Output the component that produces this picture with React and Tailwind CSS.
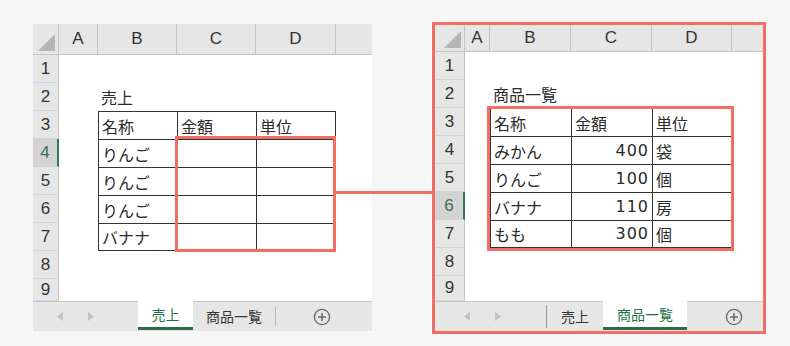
import clsx from 'clsx'

// 左右2つのシートをキャプチャ風に並べる
const ROWS = [1, 2, 3, 4, 5, 6, 7, 8, 9]
const COLS = ['A', 'B', 'C', 'D']

const leftData = {
  2: ['', '売上', '', ''],
  3: ['', '名称', '金額', '単位'],
  4: ['', 'りんご', '', ''],
  5: ['', 'りんご', '', ''],
  6: ['', 'りんご', '', ''],
  7: ['', 'バナナ', '', ''],
}

const rightData = {
  2: ['', '商品一覧', '', ''],
  3: ['', '名称', '金額', '単位'],
  4: ['', 'みかん', '400', '袋'],
  5: ['', 'りんご', '100', '個'],
  6: ['', 'バナナ', '110', '房'],
  7: ['', 'もも', '300', '個'],
}

function Corner() {
  return (
    <div className="relative border-r border-b border-[#c4c4c4] bg-[#e6e6e6]">
      <svg className="absolute right-[3px] bottom-[3px]" width="17" height="17" viewBox="0 0 17 17">
        <polygon points="17,0 17,17 0,17" fill="#b5b5b5" />
      </svg>
    </div>
  )
}

function PlusIcon() {
  return (
    <svg width="18" height="18" viewBox="0 0 18 18">
      <circle cx="9" cy="9" r="7.6" fill="none" stroke="#6b6b6b" strokeWidth="1.4" />
      <path d="M9 5v8M5 9h8" stroke="#6b6b6b" strokeWidth="1.6" />
    </svg>
  )
}

function Arrow({ dir }) {
  return (
    <svg width="6" height="9" viewBox="0 0 6 9">
      {dir === 'l'
        ? <polygon points="6,0 6,9 0,4.5" fill="#c2c2c2" />
        : <polygon points="0,0 0,9 6,4.5" fill="#c2c2c2" />}
    </svg>
  )
}

function Tab({ label, active, w }) {
  return (
    <div className={clsx(
      'flex h-full items-center justify-center text-[14px]',
      w,
      active
        ? 'bg-white text-[#217346] border-b-[3px] border-b-[#2f6b4a] -mt-px pt-px'
        : 'text-[#333]'
    )}>
      {label}
    </div>
  )
}

function Sheet({ grid, data, selRow, tabs, tabPad, plusPad, arrowPad }) {
  return (
    <div className="flex flex-col font-['Noto_Sans_CJK_JP',sans-serif]">
      <div className={clsx('grid bg-white', grid)}>
        <Corner />
        {COLS.map(c => (
          <div key={c} className="flex items-center justify-center border-r border-b border-[#c4c4c4] bg-[#e6e6e6] font-['Liberation_Sans',sans-serif] text-[17px] text-[#333]">
            {c}
          </div>
        ))}
        <div className="border-b border-[#c4c4c4] bg-[#e6e6e6]" />

        {ROWS.map(r => {
          const row = data[r] || ['', '', '', '']
          const inTable = r >= 3 && r <= 7
          return [
            <div key={'h' + r} className={clsx(
              "flex items-center justify-center border-b border-[#d4d4d4] font-['Liberation_Sans',sans-serif] text-[17px]",
              r === selRow
                ? 'bg-[#d3d3d3] text-[#3f6e55] border-r-2 border-r-[#2f7a4f]'
                : 'bg-[#e6e6e6] text-[#333] border-r border-r-[#c4c4c4]'
            )}>
              {r}
            </div>,
            ...row.map((t, i) => {
              const tbl = inTable && i >= 1
              const num = /^\d+$/.test(t)
              return (
                <div key={r + '-' + i} className={clsx(
                  'flex items-center overflow-hidden whitespace-nowrap px-[3px] text-[16px] text-[#2a2a2a]',
                  num ? "justify-end font-['DejaVu_Sans',sans-serif] tracking-[1px]" : '',
                  tbl && 'border-l border-t border-[#333]',
                  tbl && i === 3 && 'border-r',
                  tbl && r === 7 && 'border-b'
                )}>
                  {t}
                </div>
              )
            }),
            <div key={'x' + r} />,
          ]
        })}
      </div>

      <div className="flex h-[30px] items-stretch border-t border-[#c8c8c8] bg-[#e6e6e6]">
        <div className={clsx('flex items-center gap-[25px]', arrowPad)}>
          <Arrow dir="l" />
          <Arrow dir="r" />
        </div>
        <div className={clsx('flex items-stretch', tabPad)}>
          {tabs}
        </div>
        <div className={clsx('flex items-center', plusPad)}>
          <PlusIcon />
        </div>
      </div>
    </div>
  )
}

export default function App() {
  return (
    <div className="relative flex h-[346px] w-[790px] items-start overflow-hidden bg-[#f6f6f6] pt-[22px] pl-[33px]">
      {/* 左: 売上シート */}
      <div className="relative mt-[2px] w-[339px]">
        <Sheet
          grid="grid-cols-[26px_39px_79px_79px_80px_36px] grid-rows-[31px_repeat(8,28px)_22px]"
          data={leftData}
          selRow={4}
          arrowPad="pl-[24px]"
          tabPad="pl-[44px]"
          plusPad="pl-[37px]"
          tabs={[
            <Tab key="a" label="売上" active w="w-[55px]" />,
            <Tab key="b" label="商品一覧" w="w-[83px] border-r border-r-[#b5b5b5] my-[5px] !h-auto" />,
          ]}
        />
        <div className="absolute top-[112px] left-[142px] h-[116px] w-[161px] border-[3px] border-[#f26d63]" />
      </div>

      {/* つなぎ線 */}
      <div className="absolute top-[191px] left-[336px] h-[3px] w-[97px] bg-[#f26d63]" />

      {/* 右: 商品一覧シート */}
      <div className="relative ml-[60px] w-[334px] border-[3px] border-[#f26d63]">
        <Sheet
          grid="grid-cols-[30px_25px_81px_81px_80px_31px] grid-rows-[27px_repeat(8,28px)_25px]"
          data={rightData}
          selRow={6}
          arrowPad="pl-[29px]"
          tabPad="pl-[45px]"
          plusPad="pl-[38px]"
          tabs={[
            <div key="s" className="my-[3px] w-px bg-[#9a9a9a]" />,
            <Tab key="a" label="売上" w="w-[56px]" />,
            <Tab key="b" label="商品一覧" active w="w-[84px]" />,
          ]}
        />
        <div className="absolute top-[81px] left-[52px] h-[145px] w-[247px] border-[3px] border-[#f26d63]" />
      </div>
    </div>
  )
}
